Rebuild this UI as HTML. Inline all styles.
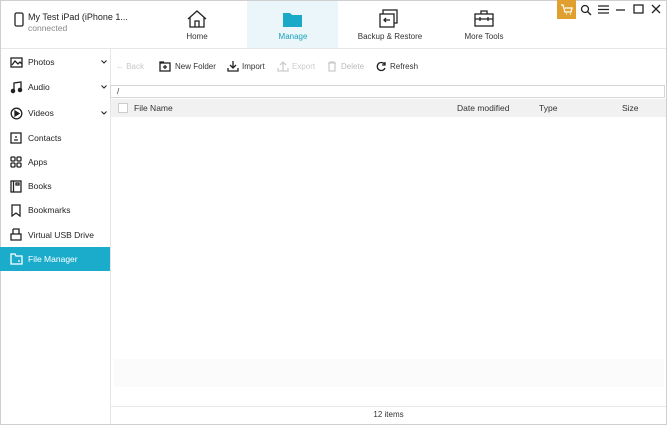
<!DOCTYPE html><html><head><style>
*{margin:0;padding:0;box-sizing:border-box}
body{width:667px;height:425px;overflow:hidden;font-family:"Liberation Sans",sans-serif;font-size:8.5px;color:#333;background:#fff;position:relative}
.a{position:absolute}
svg{position:absolute;fill:none;stroke:#222;stroke-width:1.3}
.side div.it{position:absolute;left:0;width:110px;height:24px;line-height:24px;padding-left:28px;font-size:8.5px;color:#222}
</style></head><body>
<div class="a" style="left:0;top:0;width:667px;height:425px;border:1px solid #cfcfcf"></div>
<div class="a" style="left:1px;top:48px;width:665px;height:1px;background:#e6e6e6"></div>
<svg style="left:14px;top:12px" width="10" height="16"><rect x="1" y="1" width="8" height="13" rx="1.5"/></svg>
<div class="a" style="left:28px;top:12px;font-size:9px;color:#222">My Test iPad (iPhone 1...</div>
<div class="a" style="left:28px;top:23px;font-size:8.5px;color:#888">connected</div>
<div class="a" style="left:247px;top:1px;width:91px;height:47px;background:#eaf6f9"></div>
<svg style="left:186px;top:9px" width="22" height="20"><path d="M2 10 L11 2 L20 10 M4 8 V18 H18 V8 M9 18 V12 H13 V18"/></svg>
<div class="a" style="left:160px;top:32px;width:74px;text-align:center;font-size:8px">Home</div>
<svg style="left:282px;top:9px" width="22" height="20"><path d="M1 4 H8 L10 6 H20 V18 H1 Z" fill="#1aa9c6" stroke="none"/></svg>
<div class="a" style="left:256px;top:32px;width:74px;text-align:center;font-size:8px;color:#1aa0bd">Manage</div>
<svg style="left:378px;top:9px" width="22" height="20"><rect x="5" y="1" width="14" height="13"/><rect x="2" y="5" width="14" height="13" fill="#fff"/><path d="M12 11 H6 M8 9 L6 11 L8 13"/></svg>
<div class="a" style="left:350px;top:32px;width:80px;text-align:center;font-size:8px">Backup &amp; Restore</div>
<svg style="left:473px;top:10px" width="22" height="18"><rect x="2" y="4" width="18" height="12"/><path d="M8 4 V1 H14 V4 M2 9 H20 M7 7 V11 M15 7 V11"/></svg>
<div class="a" style="left:447px;top:32px;width:74px;text-align:center;font-size:8px">More Tools</div>
<div class="a" style="left:557px;top:0;width:19px;height:19px;background:#e0a030"></div>
<svg style="left:560px;top:4px;stroke:#fff" width="14" height="11"><path d="M1 1 H3 L5 8 H11 L12 4 H5 M6 10 h1 M10 10 h1"/></svg>
<svg style="left:580px;top:4px" width="12" height="12"><circle cx="5" cy="5" r="3.5"/><path d="M7.5 7.5 L11 11"/></svg>
<svg style="left:598px;top:5px" width="11" height="9"><path d="M0 1 H11 M0 4.5 H11 M0 8 H11"/></svg>
<svg style="left:616px;top:9px" width="10" height="2"><path d="M0 1 H9"/></svg>
<svg style="left:633px;top:4px" width="11" height="11"><rect x="1" y="1" width="9" height="8"/></svg>
<svg style="left:651px;top:4px" width="10" height="10"><path d="M1 1 L9 9 M9 1 L1 9"/></svg>
<div class="a" style="left:110px;top:49px;width:1px;height:375px;background:#e6e6e6"></div>
<div class="side">
<div class="it" style="top:50px">Photos</div>
<div class="it" style="top:75px">Audio</div>
<div class="it" style="top:101px">Videos</div>
<div class="it" style="top:126px">Contacts</div>
<div class="it" style="top:150px">Apps</div>
<div class="it" style="top:174px">Books</div>
<div class="it" style="top:198px">Bookmarks</div>
<div class="it" style="top:223px">Virtual USB Drive</div>
<div class="it" style="top:247px;background:#1caccb;color:#fff">File Manager</div>
</div>
<svg style="left:101px;top:60px;stroke-width:1.1" width="6" height="4"><path d="M0.5 0.5 L3 3 L5.5 0.5"/></svg>
<svg style="left:101px;top:85px;stroke-width:1.1" width="6" height="4"><path d="M0.5 0.5 L3 3 L5.5 0.5"/></svg>
<svg style="left:101px;top:111px;stroke-width:1.1" width="6" height="4"><path d="M0.5 0.5 L3 3 L5.5 0.5"/></svg>
<svg style="left:10px;top:57px" width="13" height="11"><rect x="1" y="1" width="11" height="9"/><path d="M2 8 L5 4 L8 7 L10 5 L12 7"/></svg>
<svg style="left:10px;top:81px" width="13" height="13"><path d="M4 10 V2 L11 1 V9"/><circle cx="3" cy="10" r="1.6" fill="#222"/><circle cx="10" cy="9" r="1.6" fill="#222"/></svg>
<svg style="left:10px;top:107px" width="13" height="13"><circle cx="6.5" cy="6.5" r="5.3"/><path d="M5 4 L9 6.5 L5 9Z" fill="#222"/></svg>
<svg style="left:10px;top:132px" width="12" height="12"><rect x="1" y="1" width="10" height="10"/><path d="M4 8 H8 M6 4 V6" /></svg>
<svg style="left:10px;top:156px" width="12" height="12"><rect x="1" y="1" width="4" height="4" rx="1"/><rect x="7" y="1" width="4" height="4" rx="1"/><rect x="1" y="7" width="4" height="4" rx="1"/><rect x="7" y="7" width="4" height="4" rx="1"/></svg>
<svg style="left:10px;top:180px" width="12" height="13"><rect x="1" y="1" width="10" height="11"/><path d="M3.5 1 V12 M6 3 H9 V5 H6Z"/></svg>
<svg style="left:11px;top:204px" width="10" height="13"><path d="M1 1 H9 V12 L5 9 L1 12 Z"/></svg>
<svg style="left:10px;top:228px" width="12" height="13"><path d="M3 1 H9 V6 M3 1 V6 M1 6 H11 V12 H1 Z"/></svg>
<svg style="left:10px;top:253px;stroke:#fff" width="13" height="12"><path d="M1 1 H5 L6 3 H12 V11 H1 Z M8 8 H10"/></svg>
<div class="a" style="left:116px;top:62px;color:#c8c8c8;font-size:8px">&#8592; Back</div>
<svg style="left:159px;top:61px" width="12" height="11"><rect x="1" y="2" width="10" height="8"/><path d="M1 2 V1 H5 M6 4 V8 M4 6 H8"/></svg>
<div class="a" style="left:175px;top:62px;font-size:8px">New Folder</div>
<svg style="left:227px;top:60px" width="12" height="12"><path d="M6 1 V8 M3 5 L6 8 L9 5 M1 8 V11 H11 V8"/></svg>
<div class="a" style="left:242px;top:62px;font-size:8px">Import</div>
<svg style="left:277px;top:60px;stroke:#ccc" width="12" height="12"><path d="M6 11 V3 M3 5 L6 2 L9 5 M1 8 V11 H11 V8"/></svg>
<div class="a" style="left:292px;top:62px;color:#ccc;font-size:8px">Export</div>
<svg style="left:327px;top:61px;stroke:#ccc" width="10" height="11"><path d="M1 2 H9 M3 2 V1 H7 V2 M2 2 V10 H8 V2"/></svg>
<div class="a" style="left:341px;top:62px;color:#bbb;font-size:8px">Delete</div>
<svg style="left:376px;top:61px" width="11" height="11"><path d="M9 4 A4 4 0 1 0 9 7"/><path d="M9 1 V4 H6"/></svg>
<div class="a" style="left:390px;top:62px;font-size:8px">Refresh</div>
<div class="a" style="left:110px;top:85px;width:555px;height:13px;border:1px solid #d6d6d6;padding-left:6px;line-height:11px;font-size:8px">/</div>
<div class="a" style="left:111px;top:99px;width:555px;height:18px;background:#f1f1f1"></div>
<div class="a" style="left:118px;top:103px;width:10px;height:10px;border:1px solid #ccc;background:#fff"></div>
<div class="a" style="left:134px;top:103px">File Name</div>
<div class="a" style="left:457px;top:103px">Date modified</div>
<div class="a" style="left:539px;top:103px">Type</div>
<div class="a" style="left:622px;top:103px">Size</div>
<div class="a" style="left:114px;top:359px;width:550px;height:28px;background:#fbfbfb"></div>
<div class="a" style="left:111px;top:406px;width:555px;height:1px;background:#e8e8e8"></div>
<div class="a" style="left:111px;top:410px;width:555px;text-align:center;font-size:8px">12 items</div>
</body></html>
